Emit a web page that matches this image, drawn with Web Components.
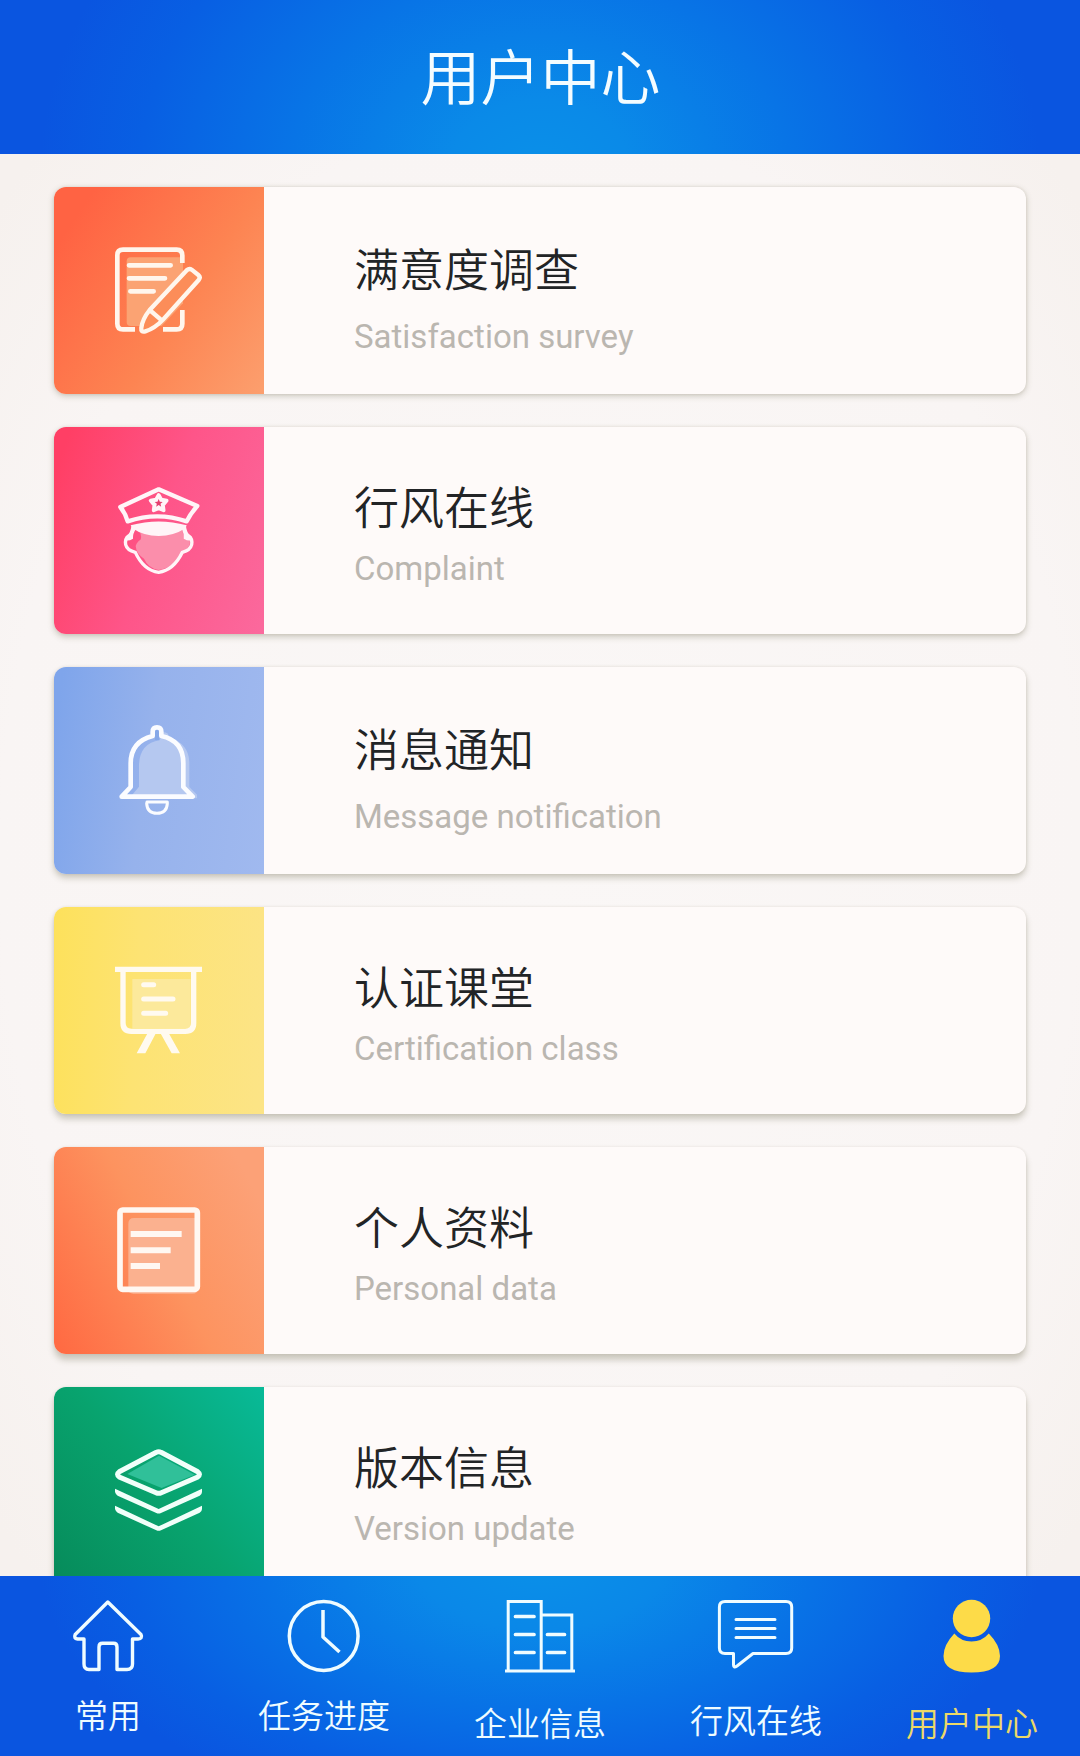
<!DOCTYPE html>
<html lang="zh-CN">
<head>
<meta charset="utf-8">
<title>用户中心</title>
<style>
html,body{margin:0;height:100%}
body{overflow:hidden}
</style>
</head>
<body>
<user-center></user-center>
<script>
const define = (name, css, html) => customElements.define(name, class extends HTMLElement {
  constructor() {
    super();
    this.attachShadow({mode: 'open'}).innerHTML = `<style>${css}</style>${html}`;
  }
});

define('app-header', `
:host{display:flex;align-items:center;justify-content:center;flex:none;height:154px;box-sizing:border-box;padding:0 0 7px 1px;color:#f4fcff;font-size:60px;line-height:88px;
background:radial-gradient(ellipse 500px 400px at 50% 112%,#0a90e8 0%,#0a8ae8 18%,#0874e6 50%,#085fe3 80%,#0a55e0 100%)}
h1{margin:0;font:inherit;font-weight:350}`,
`<h1><slot></slot></h1>`);

define('menu-card', `
:host{display:flex;flex:none;height:207px;border-radius:12px;overflow:hidden;background:#fefaf9;box-shadow:0 var(--drop,2px) 6px rgba(100,95,65,.3),0 0 3px rgba(100,90,60,.12)}
.tile{flex:none;width:210px;height:207px;background:var(--tile)}
.text{display:flex;flex-direction:column;padding:46px 0 0 90px}
.title{font-size:45px;line-height:66px;font-weight:350;color:#222426;white-space:nowrap}
.sub{font-family:Roboto,"Noto Sans",sans-serif;font-size:33px;line-height:40px;color:#bab6b0;white-space:nowrap;margin-top:10px}
:host([roomy]) .text{padding-top:48px}
:host([roomy]) .sub{margin-top:16px}
::slotted(svg){display:block;width:210px;height:207px}`,
`<div class="tile"><slot name="icon"></slot></div><div class="text"><div class="title"><slot></slot></div><div class="sub"><slot name="sub"></slot></div></div>`);

define('nav-item', `
:host{display:flex;flex-direction:column;align-items:center;flex:1;color:#effcff;font-size:33px;line-height:48px;font-weight:350}
:host([active]){color:#ecd968}
.label{margin-top:var(--gap,14px);white-space:nowrap}
::slotted(svg){display:block;width:216px;height:100px}`,
`<slot name="icon"></slot><div class="label"><slot></slot></div>`);

define('app-nav', `
:host{display:flex;flex:none;height:180px;
background:radial-gradient(ellipse 500px 270px at 50% -8%,#0a90e8 0%,#0a88e8 25%,#0872e6 55%,#085fe3 82%,#0a55e0 100%)}`,
`<slot></slot>`);

define('user-center', `
:host{display:flex;flex-direction:column;height:100%;font-family:"Noto Sans CJK SC",sans-serif}
main{flex:1;min-height:0;overflow:hidden;display:flex;flex-direction:column;gap:33px;padding:33px 54px 0;
background:radial-gradient(ellipse 720px 1000px at 50% 50%,#faf7f6 0%,#f9f5f4 75%,#f6f1ee 100%)}`,
`<app-header>用户中心</app-header>
<main>
<menu-card roomy style="--tile:linear-gradient(124deg,#ff6343 12%,#fd8452 60%,#fc9f6e);--drop:2px">
<svg slot="icon" viewBox="42 51 630 621" fill="none" stroke="#fff6ed" stroke-width="14">
<path d="M272 262H429V400L365 468H272Q260 468 260 456V274Q260 262 272 262Z" fill="#fba373" stroke="none"/>
<path d="M427 279V257Q427 239 410 239H249Q232 239 232 256V461Q232 478 249 478H285M369 478H410Q427 478 427 461V420"/>
<path d="M267 286H392M267 325H375M271 364H341" stroke-linecap="round"/>
<path d="M329 420L441 300Q448 294 455 299L475 315Q483 322 476 330L369 449Q344 476 316 484Q302 488 304 473Q307 448 329 420Z" fill="#fc8d59" stroke-width="13" stroke-linejoin="round"/>
<path d="M329 420L366 452" stroke-width="13"/>
</svg>满意度调查<span slot="sub">Satisfaction survey</span></menu-card>
<menu-card style="--tile:linear-gradient(110deg,#ff3f65 6%,#fe5589 50%,#fb699d);--drop:3px">
<svg slot="icon" viewBox="42 51 630 621" fill="none" stroke="#fff5f8" stroke-width="13">
<path d="M300 366Q356 382 427 356L431 386 450 391Q452 416 426 427Q402 474 356 480Q324 474 312 446Q289 432 287 408Q292 394 301 390Q306 382 300 366Z" fill="#fb8eab" stroke="none"/>
<path d="M356 238L472 288Q451 311 440 334Q352 304 263 334Q256 309 241 291Z" stroke-linejoin="round"/>
<path d="M356 255L364 269 380 272 369 285 371 301 356 295 341 301 343 285 332 272 348 269Z" fill="#fff5f8" stroke-linejoin="round" stroke-width="11"/>
<path d="M356 267L359.500 275.500 368 276 361.500 281.500 363.500 290 356 285 348.500 290 350.500 281.500 344 276 352.500 275.500Z" fill="#e63f70" stroke="none"/>
<path d="M272 346Q356 323 440 346L437 354Q401 378 356 378Q311 378 276 354Z" fill="#fff5f8" stroke="none"/>
<path d="M279 350Q276 370 266 378Q254 386 257 404Q261 421 286 427Q311 481 356 487Q401 481 427 427Q451 421 455 404Q458 386 446 378Q436 370 433 350" stroke-width="10"/>
<path d="M277 350L288 357Q278 370 279 386Q266 394 257 391Q260 378 270 372ZM435 350L426 357Q432 370 431 386Q444 394 455 391Q451 378 441 372Z" fill="#fff5f8" stroke="none"/>
</svg>行风在线<span slot="sub">Complaint</span></menu-card>
<menu-card roomy style="--tile:linear-gradient(98deg,#7fa5eb 4%,#96b2ec 45%,#a0b9ef);--drop:4px">
<svg slot="icon" viewBox="42 51 630 621" fill="none" stroke="#fbfcff" stroke-width="14">
<path d="M368 247Q386 246 386 260Q446 281 448 335V411L471 434V445H268L297 410V345Q299 280 359 271Z" fill="#b5c8f0" stroke="none"/>
<path d="M338 258V246Q338 232 351 232Q364 232 364 246V258Q430 272 430 340V411L458 440H245L272 411V340Q272 275 338 258Z" stroke-linejoin="round"/>
<path d="M351 239Q357 239 357 246V270H345V246Q345 239 351 239Z" fill="#86a8e8" stroke="none"/>
<path d="M321 456H382V461Q380 490 351 490Q322 490 320 461Z" stroke-width="9" stroke-linejoin="round"/>
</svg>消息通知<span slot="sub">Message notification</span></menu-card>
<menu-card style="--tile:linear-gradient(93deg,#fde15b,#fde373 40%,#fce486);--drop:5px">
<svg slot="icon" viewBox="42 51 630 621" fill="none" stroke="#fffaf0" stroke-width="16">
<path d="M277 267H452V415H277Z" fill="#fce99b" stroke="none"/>
<path d="M225 238H486M249 238V399Q249 424 274 424H436Q461 424 461 399V238"/>
<path d="M311 284H341M311 327H399M311 370H377" stroke-width="15" stroke-linecap="round"/>
<path d="M323 429H348L316 490H290ZM361 429H386L420 490H395Z" fill="#fffaf0" stroke="none"/>
</svg>认证课堂<span slot="sub">Certification class</span></menu-card>
<menu-card style="--tile:linear-gradient(62deg,#ff6b43 3%,#fd935f 50%,#fca177 90%);--drop:6px">
<svg slot="icon" viewBox="42 51 630 621" fill="none" stroke="#fff8f2" stroke-width="17">
<path d="M282 264H472V480Q472 491 458 491H280Q265 491 265 478V281Q265 264 282 264Z" fill="#fbb18f" stroke="none"/>
<rect x="240" y="240" width="232" height="238" rx="8"/>
<path d="M272 312H425M272 361H392M272 408H360" stroke-width="18"/>
</svg>个人资料<span slot="sub">Personal data</span></menu-card>
<menu-card style="--tile:linear-gradient(50deg,#078c5b 5%,#08a36e 50%,#08ba98);--drop:6px">
<svg slot="icon" viewBox="42 51 630 621" fill="none" stroke="#f1fffa" stroke-width="14">
<path d="M357 257L464 314 365 354 262 312Z" fill="#30c099" stroke="none"/>
<path d="M349 247Q356 243 363 247L473 305Q484 313 473 321L364 368Q356 372 348 368L238 321Q227 313 238 305Z" stroke-width="15"/>
<path d="M225 356L356 417 486 356V366Q486 373 479 377L363 429Q356 432 349 429L233 377Q227 373 225 366ZM225 407L356 469 486 407V417Q486 424 479 428L363 481Q356 484 349 481L233 428Q227 424 225 417Z" fill="#f1fffa" stroke="none"/>
</svg>版本信息<span slot="sub">Version update</span></menu-card>
</main>
<app-nav>
<nav-item>
<svg slot="icon" viewBox="0 1576 216 100" fill="none" stroke="#effcff" stroke-width="3.4" stroke-linejoin="round">
<path d="M107.800 1602L75.200 1634.500Q73.500 1638.500 77.500 1639H84V1664Q84 1669.500 89 1669.500H99V1647Q99 1643.300 102.500 1643.300H113.500Q117 1643.300 117 1647V1669.500H127Q132.500 1669.500 132.500 1664V1639H138Q143 1638.500 141 1634.500Z"/></svg>常用</nav-item>
<nav-item>
<svg slot="icon" viewBox="216 1576 216 100" fill="none" stroke="#effcff" stroke-width="3.500" stroke-linejoin="round">
<circle cx="323.700" cy="1636" r="34.400"/><path d="M323 1610V1637L339.500 1652"/></svg>任务进度</nav-item>
<nav-item style="--gap:22px">
<svg slot="icon" viewBox="432 1576 216 100" fill="none" stroke="#effcff" stroke-width="3">
<path d="M508.200 1671V1601.500H541.200V1671M541.200 1615H571.800V1671M505 1671H575"/><path d="M515.500 1616.500H534M515.500 1634.500H534M515.500 1652.500H534M547.500 1634.500H564.500M547.500 1652.500H564.500" stroke-width="3.700" stroke-linecap="round"/></svg>企业信息</nav-item>
<nav-item style="--gap:19px">
<svg slot="icon" viewBox="648 1576 216 100" fill="none" stroke="#effcff" stroke-width="3" stroke-linejoin="round">
<path d="M725 1601.500H786Q791.700 1601.500 791.700 1607V1648Q791.700 1653.500 786 1653.500H753L737 1666Q733.500 1668.500 733.500 1665V1653.500H725Q719.400 1653.500 719.400 1648V1607Q719.400 1601.500 725 1601.500Z"/><path d="M736 1619.500H775M736 1628.500H775M736 1637.500H775" stroke-linecap="round"/></svg>行风在线</nav-item>
<nav-item active style="--gap:22px">
<svg slot="icon" viewBox="864 1576 216 100" fill="#fddb48">
<circle cx="971.500" cy="1618.500" r="18.700"/><path d="M954.300 1633.500Q961 1641.500 971.500 1641.500Q982 1641.500 988.800 1633.500Q1000 1645 1000 1656Q1000 1672.500 971.500 1672.500Q943.500 1672.500 943.500 1656Q943.500 1645 954.300 1633.500Z"/></svg>用户中心</nav-item>
</app-nav>`);
</script>
</body>
</html>
